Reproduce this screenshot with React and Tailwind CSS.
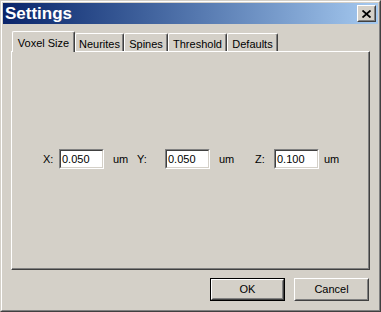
import React from 'react';

const tabs = [
  { label: 'Voxel Size', w: 'w-[63px]', active: true },
  { label: 'Neurites', w: 'w-[49px]' },
  { label: 'Spines', w: 'w-[44px]' },
  { label: 'Threshold', w: 'w-[59px]' },
  { label: 'Defaults', w: 'w-[51px]' },
];

function Field({ value }) {
  return (
    <div className="w-[45px] h-[20px] border border-t-[#808080] border-l-[#808080] border-r-white border-b-white">
      <div className="w-full h-full bg-white border border-t-[#404040] border-l-[#404040] border-r-[#d4d0c8] border-b-[#d4d0c8] pl-[1px] leading-[16px]">
        {value}
      </div>
    </div>
  );
}

function Button({ children, isDefault }) {
  return (
    <div className={`w-[75px] h-[23px] ${isDefault ? 'border border-black' : ''}`}>
      <div className="w-full h-full border border-t-white border-l-white border-r-[#404040] border-b-[#404040]">
        <div className="w-full h-full border border-t-[#d4d0c8] border-l-[#d4d0c8] border-r-[#808080] border-b-[#808080] flex items-center justify-center">
          {children}
        </div>
      </div>
    </div>
  );
}

export default function App() {
  return (
    <div className="w-[381px] h-[312px] bg-[#d4d0c8] text-black text-[11px] font-['Liberation_Sans',Arial,sans-serif]">
      <div className="w-full h-full border border-t-[#d4d0c8] border-l-[#d4d0c8] border-r-[#404040] border-b-[#404040]">
        <div className="w-full h-full border border-t-white border-l-white border-r-[#808080] border-b-[#808080] p-px flex flex-col">
          {/* title bar */}
          <div className="h-[21px] flex items-center justify-between bg-gradient-to-r from-[#0a246a] to-[#a6caf0] pl-[2px] pr-[2px]">
            <span className="text-white text-[17px] font-bold leading-none">Settings</span>
            <div className="w-[19px] h-[17px] border border-t-white border-l-white border-r-[#404040] border-b-[#404040] bg-[#d4d0c8]">
              <div className="w-full h-full border border-t-[#d4d0c8] border-l-[#d4d0c8] border-r-[#808080] border-b-[#808080] flex items-center justify-center">
                <svg width="9" height="8" viewBox="0 0 9 8">
                  <path d="M0.5 0.5 L8.5 7.5 M8.5 0.5 L0.5 7.5" stroke="#000" strokeWidth="1.8" />
                </svg>
              </div>
            </div>
          </div>

          {/* body */}
          <div className="flex-1 px-[8px] pt-[7px] flex flex-col">
            <div className="flex items-end h-[20px] pl-[1px]">
              {tabs.map((t) =>
                t.active ? (
                  <div
                    key={t.label}
                    className={`${t.w} h-[21px] -mb-px relative z-10 bg-[#d4d0c8] border-l border-t border-r border-l-white border-t-white border-r-[#404040] rounded-t-[2px] shadow-[inset_-1px_0_#808080] flex justify-center pt-[3px]`}
                  >
                    {t.label}
                  </div>
                ) : (
                  <div
                    key={t.label}
                    className={`${t.w} h-[18px] border-l border-t border-r border-l-white border-t-white border-r-[#404040] rounded-t-[2px] shadow-[inset_-1px_0_#808080] flex justify-center pt-[2px]`}
                  >
                    {t.label}
                  </div>
                )
              )}
            </div>

            <div className="h-[219px] border border-t-white border-l-white border-r-[#404040] border-b-[#404040] shadow-[inset_-1px_-1px_#808080]">
              <div className="flex items-center pt-[97px] pl-[31px]">
                <span className="w-[16px]">X:</span>
                <Field value="0.050" />
                <span className="ml-[9px] w-[24px]">um</span>
                <span className="w-[28px]">Y:</span>
                <Field value="0.050" />
                <span className="ml-[9px] w-[36px]">um</span>
                <span className="w-[19px]">Z:</span>
                <Field value="0.100" />
                <span className="ml-[5px]">um</span>
              </div>
            </div>

            <div className="mt-[8px] flex justify-end gap-[9px] pr-[1px]">
              <Button isDefault>OK</Button>
              <Button>Cancel</Button>
            </div>
          </div>
        </div>
      </div>
    </div>
  );
}
